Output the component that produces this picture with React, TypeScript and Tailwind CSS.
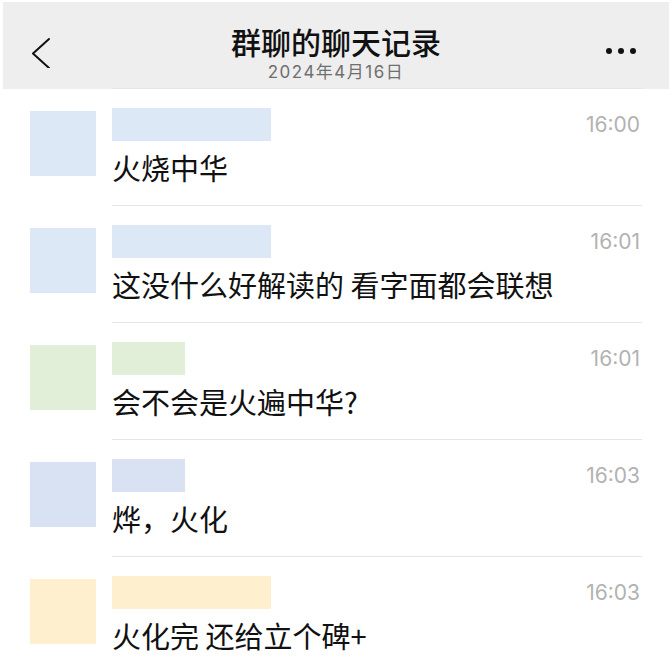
import React from "react";

type Msg = {
  id: number;
  color: string;
  nameWidth: string;
  text: string;
  time: string;
};

const messages: Msg[] = [
  { id: 1, color: "bg-[#dce8f5]", nameWidth: "w-[159px]", text: "火烧中华", time: "16:00" },
  { id: 2, color: "bg-[#dce8f5]", nameWidth: "w-[159px]", text: "这没什么好解读的 看字面都会联想", time: "16:01" },
  { id: 3, color: "bg-[#e1efd9]", nameWidth: "w-[73px]", text: "会不会是火遍中华?", time: "16:01" },
  { id: 4, color: "bg-[#d9e2f3]", nameWidth: "w-[73px]", text: "烨，火化", time: "16:03" },
  { id: 5, color: "bg-[#fef0cf]", nameWidth: "w-[159px]", text: "火化完 还给立个碑+", time: "16:03" },
];

const App = () => {
  return (
    <div className="w-[672px] h-[672px] overflow-hidden bg-white pt-[2px] font-['Inter','Noto_Sans_CJK_SC',sans-serif] text-[#111]">
      {/* 顶部导航 */}
      <div className="mx-[3px] h-[87px] bg-[#eeeeee] grid grid-cols-[1fr_auto_1fr] items-start">
        <div className="pl-[28px] pt-[34px]">
          <svg width="20" height="32" viewBox="0 0 20 32" fill="none">
            <polyline
              points="18,3 2,17.5 18,32"
              stroke="#111"
              strokeWidth="2"
              strokeLinecap="round"
              strokeLinejoin="round"
            />
          </svg>
        </div>
        <div className="flex flex-col items-center pt-[21px]">
          <div className="text-[30px] leading-[36px] font-medium font-['Noto_Sans_CJK_SC',sans-serif]">群聊的聊天记录</div>
          <div className="mt-[3px] text-[17px] leading-[20px] tracking-[1.5px] text-[#6f6f6f]">2024年4月16日</div>
        </div>
        <div className="flex justify-end gap-[6px] pr-[33px] pt-[46px]">
          <span className="w-[6px] h-[6px] rounded-full bg-[#111]" />
          <span className="w-[6px] h-[6px] rounded-full bg-[#111]" />
          <span className="w-[6px] h-[6px] rounded-full bg-[#111]" />
        </div>
      </div>

      {/* 消息列表 */}
      <div className="-mt-[1px]">
        {messages.map((m) => (
          <div key={m.id} className="flex items-start">
            <div className={`ml-[30px] mt-[23px] w-[66px] h-[65px] shrink-0 ${m.color}`} />
            <div className="ml-[16px] mr-[30px] flex-1 border-t border-[#e6e6e6] pt-[19px] pb-[22px] flex justify-between items-start">
              <div className="flex flex-col">
                <div className={`h-[33px] ${m.nameWidth} ${m.color}`} />
                <div className="mt-[10px] text-[29px] leading-[32px] whitespace-nowrap font-['Noto_Sans_CJK_SC',sans-serif]">
                  {m.text}
                </div>
              </div>
              <div className="mt-[6px] mr-[2px] text-[21px] leading-none text-[#b2b2b2]">{m.time}</div>
            </div>
          </div>
        ))}
      </div>
    </div>
  );
};

export default App;
